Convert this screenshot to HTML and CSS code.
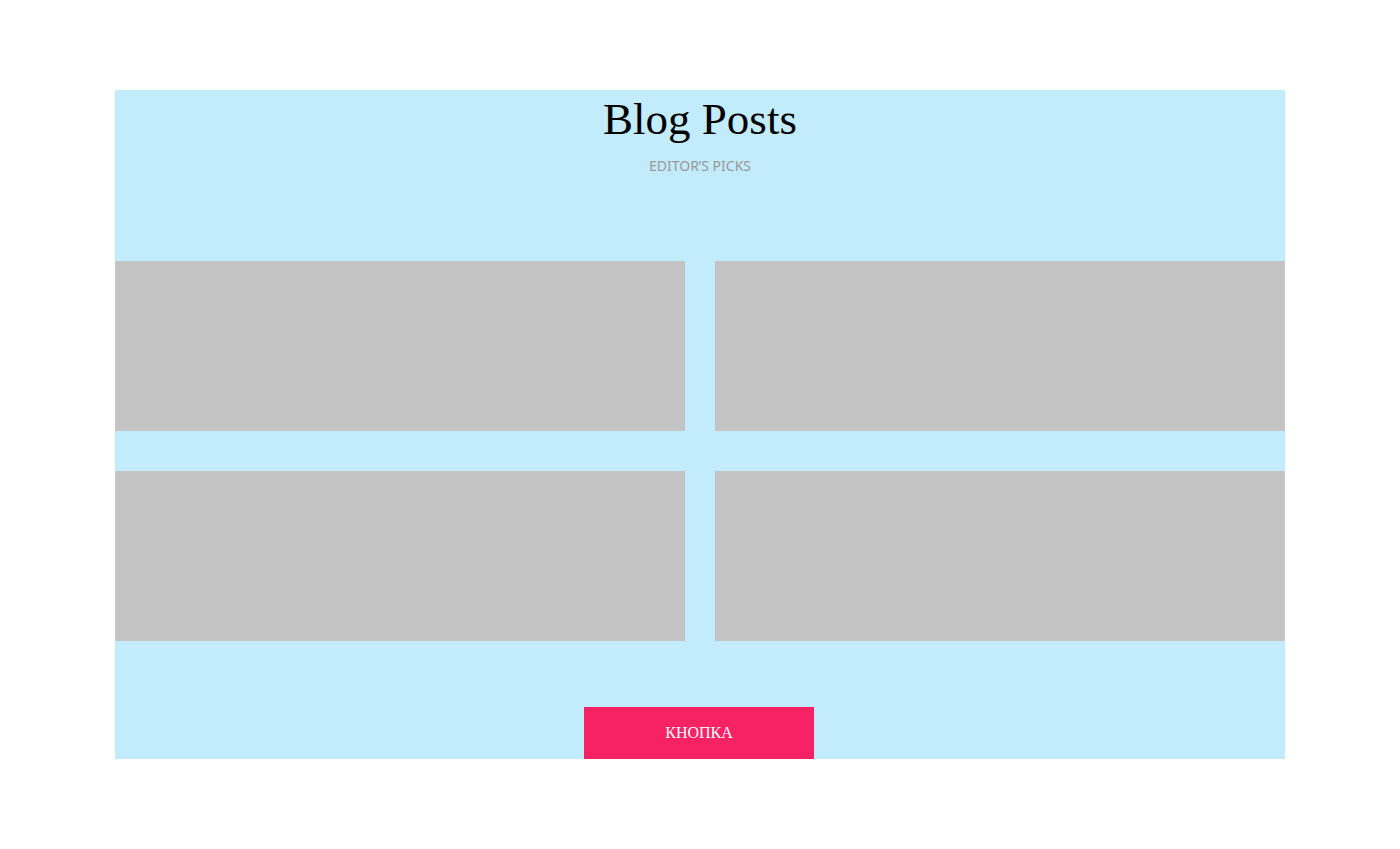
FILE: index.html
```html
<!DOCTYPE html>
<html lang="ru">
<head>
<meta charset="utf-8">
<title>Blog Posts</title>
<link rel="stylesheet" href="styles.css">
</head>
<body>
<section class="blog">
  <h1 class="blog-title">Blog Posts</h1>
  <p class="blog-subtitle">EDITOR’S PICKS</p>
  <div class="posts">
    <div class="post"></div>
    <div class="post"></div>
    <div class="post"></div>
    <div class="post"></div>
  </div>
  <div class="actions">
    <button class="btn" type="button">КНОПКА</button>
  </div>
</section>
</body>
</html>
```
FILE: styles.css
```css
html, body {
  margin: 0;
  padding: 0;
  background: #ffffff;
}

.blog {
  width: 1170px;
  margin: 90px auto 0;
  background: #c2ebfc;
  display: flex;
  flex-direction: column;
  align-items: center;
  height: 669px;
  box-sizing: border-box;
}

.blog-title {
  margin: 0;
  font-family: "Liberation Serif", "DejaVu Serif", serif;
  font-weight: 400;
  font-size: 45px;
  line-height: 58px;
  padding-bottom: 2px;
  color: #000;
}

.blog-subtitle {
  margin: 6px 0 0;
  font-family: "Noto Sans", "Open Sans", sans-serif;
  font-size: 14px;
  line-height: 20px;
  color: #999999;
}

.posts {
  margin-top: 85px;
  width: 100%;
  display: grid;
  grid-template-columns: 1fr 1fr;
  column-gap: 30px;
  row-gap: 40px;
}

.post {
  height: 170px;
  background: #c4c4c4;
}

.actions {
  margin-top: 66px;
  width: 100%;
  display: flex;
  justify-content: center;
  padding-right: 2px;
  box-sizing: border-box;
}

.btn {
  width: 230px;
  height: 52px;
  border: 0;
  padding: 0;
  background: #f72264;
  color: #ffffff;
  font-family: "Liberation Serif", "DejaVu Serif", serif;
  font-size: 16px;
  line-height: 52px;
  cursor: pointer;
}
```
